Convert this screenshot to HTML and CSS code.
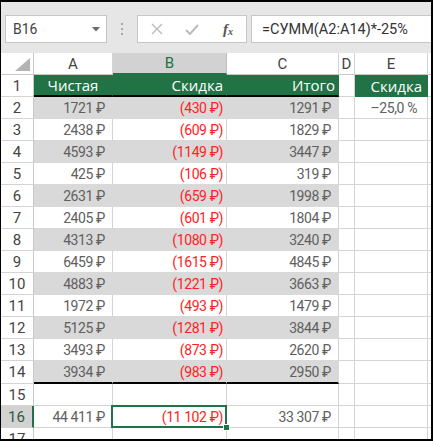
FILE: index.html
```html
<!DOCTYPE html>
<html lang="ru">
<head>
<meta charset="utf-8">
<title>Excel</title>
<link rel="stylesheet" href="styles.css">
</head>
<body>
<div class="app">
  <div class="toolbar">
    <div class="namebox">
      <span class="name">B16</span>
      <svg class="dd" width="8" height="5" viewBox="0 0 8 5"><path d="M0 0H8L4 4.5Z" fill="#6a6a6a"/></svg>
    </div>
    <div class="grip"><i></i><i></i><i></i></div>
    <div class="btnbox">
      <svg class="ico" width="12" height="12" viewBox="0 0 12 12"><path d="M1 1L11 11M11 1L1 11" stroke="#bcbcbc" stroke-width="1.4" fill="none"/></svg>
      <svg class="ico" width="14" height="11" viewBox="0 0 14 11"><path d="M1 6L5 10L13 1" stroke="#bcbcbc" stroke-width="2" fill="none"/></svg>
      <span class="fx">f<sub>x</sub></span>
    </div>
    <div class="formula">=СУММ(A2:A14)*-25%</div>
  </div>

  <div class="sheet">
    <div class="c corner"><svg width="15" height="13" viewBox="0 0 15 13"><path d="M15 0V13H0Z" fill="#b3b3b3"/></svg></div>
    <div class="c ch">A</div>
    <div class="c ch sel">B</div>
    <div class="c ch">C</div>
    <div class="c ch">D</div>
    <div class="c ch">E</div>
    <div class="c ch stub"></div>

    <div class="c rh">1</div>
    <div class="c hd hdc tbot">Чистая</div>
    <div class="c hd tbot">Скидка</div>
    <div class="c hd tbot">Итого</div>
    <div class="c"></div>
    <div class="c hd hde">Скидка</div>
    <div class="c stub"></div>

    <div class="c rh">2</div>
    <div class="c band pos">1721 ₽</div>
    <div class="c band neg">(430 ₽)</div>
    <div class="c band pos">1291 ₽</div>
    <div class="c"></div>
    <div class="c pct">–25,0 %</div>
    <div class="c stub"></div>

    <div class="c rh">3</div>
    <div class="c w pos">2438 ₽</div>
    <div class="c w neg">(609 ₽)</div>
    <div class="c w pos">1829 ₽</div>
    <div class="c"></div>
    <div class="c"></div>
    <div class="c stub"></div>

    <div class="c rh">4</div>
    <div class="c band pos">4593 ₽</div>
    <div class="c band neg">(1149 ₽)</div>
    <div class="c band pos">3447 ₽</div>
    <div class="c"></div>
    <div class="c"></div>
    <div class="c stub"></div>

    <div class="c rh">5</div>
    <div class="c w pos">425 ₽</div>
    <div class="c w neg">(106 ₽)</div>
    <div class="c w pos">319 ₽</div>
    <div class="c"></div>
    <div class="c"></div>
    <div class="c stub"></div>

    <div class="c rh">6</div>
    <div class="c band pos">2631 ₽</div>
    <div class="c band neg">(659 ₽)</div>
    <div class="c band pos">1998 ₽</div>
    <div class="c"></div>
    <div class="c"></div>
    <div class="c stub"></div>

    <div class="c rh">7</div>
    <div class="c w pos">2405 ₽</div>
    <div class="c w neg">(601 ₽)</div>
    <div class="c w pos">1804 ₽</div>
    <div class="c"></div>
    <div class="c"></div>
    <div class="c stub"></div>

    <div class="c rh">8</div>
    <div class="c band pos">4313 ₽</div>
    <div class="c band neg">(1080 ₽)</div>
    <div class="c band pos">3240 ₽</div>
    <div class="c"></div>
    <div class="c"></div>
    <div class="c stub"></div>

    <div class="c rh">9</div>
    <div class="c w pos">6459 ₽</div>
    <div class="c w neg">(1615 ₽)</div>
    <div class="c w pos">4845 ₽</div>
    <div class="c"></div>
    <div class="c"></div>
    <div class="c stub"></div>

    <div class="c rh">10</div>
    <div class="c band pos">4883 ₽</div>
    <div class="c band neg">(1221 ₽)</div>
    <div class="c band pos">3663 ₽</div>
    <div class="c"></div>
    <div class="c"></div>
    <div class="c stub"></div>

    <div class="c rh">11</div>
    <div class="c w pos">1972 ₽</div>
    <div class="c w neg">(493 ₽)</div>
    <div class="c w pos">1479 ₽</div>
    <div class="c"></div>
    <div class="c"></div>
    <div class="c stub"></div>

    <div class="c rh">12</div>
    <div class="c band pos">5125 ₽</div>
    <div class="c band neg">(1281 ₽)</div>
    <div class="c band pos">3844 ₽</div>
    <div class="c"></div>
    <div class="c"></div>
    <div class="c stub"></div>

    <div class="c rh">13</div>
    <div class="c w pos">3493 ₽</div>
    <div class="c w neg">(873 ₽)</div>
    <div class="c w pos">2620 ₽</div>
    <div class="c"></div>
    <div class="c"></div>
    <div class="c stub"></div>

    <div class="c rh">14</div>
    <div class="c band pos tbot">3934 ₽</div>
    <div class="c band neg tbot">(983 ₽)</div>
    <div class="c band pos tbot">2950 ₽</div>
    <div class="c"></div>
    <div class="c"></div>
    <div class="c stub"></div>

    <div class="c rh">15</div>
    <div class="c"></div>
    <div class="c"></div>
    <div class="c"></div>
    <div class="c"></div>
    <div class="c"></div>
    <div class="c stub"></div>

    <div class="c rh rsel">16</div>
    <div class="c pos">44 411 ₽</div>
    <div class="c neg active">(11 102 ₽)<span class="selbox"><span class="handle"></span></span></div>
    <div class="c pos">33 307 ₽</div>
    <div class="c"></div>
    <div class="c"></div>
    <div class="c stub"></div>

    <div class="c rh">17</div>
    <div class="c"></div>
    <div class="c"></div>
    <div class="c"></div>
    <div class="c"></div>
    <div class="c"></div>
    <div class="c stub"></div>
  </div>
</div>
</body>
</html>
```

FILE: styles.css
```css
* { box-sizing: border-box; }
html, body { margin: 0; padding: 0; background: #fff; }
body { font-family: Roboto, "Open Sans", "Noto Sans", "DejaVu Sans", sans-serif; }

.app {
  width: 433px;
  height: 441px;
  border-top: 2px solid #000;
  border-left: 1px solid #000;
  border-right: 2px solid #000;
  border-bottom: 2px solid #000;
  overflow: hidden;
  background: #fff;
}

/* formula bar */
.toolbar {
  height: 51px;
  background: #e6e6e6;
  display: flex;
  align-items: flex-start;
  padding: 13px 0 0 4px;
}
.namebox, .btnbox, .formula {
  height: 28px;
  background: #fff;
  border: 1px solid #c6c6c6;
  display: flex;
  align-items: center;
}
.namebox {
  width: 102px;
  padding: 0 6px 0 7px;
  justify-content: space-between;
}
.name { font-size: 14px; color: #444; }
.grip {
  width: 30px;
  height: 28px;
  display: flex;
  flex-direction: column;
  align-items: center;
  justify-content: center;
  gap: 3px;
}
.grip i { display: block; width: 2px; height: 2px; background: #a8a8a8; }
.btnbox {
  width: 110px;
  padding-left: 13px;
  gap: 22px;
}
.fx {
  font-family: "Liberation Serif", "DejaVu Serif", serif;
  font-style: italic;
  font-weight: bold;
  font-size: 15px;
  color: #555;
  margin-left: 2px;
  line-height: 1;
}
.fx sub { font-size: 10px; vertical-align: -1px; }
.formula {
  flex: 1;
  margin-left: 4px;
  margin-right: -2px;
  padding-left: 10px;
  font-size: 14.5px;
  color: #333;
}

/* sheet grid */
.sheet {
  height: 386px;
  overflow: hidden;
  display: grid;
  grid-template-columns: 33px 79px 114px 112px 16px 73px 3px;
  grid-template-rows: 22px 22px repeat(12, 22px) 23px 22px 22px 22px;
}
.c {
  border-right: 1px solid #d4d4d4;
  border-bottom: 1px solid #d4d4d4;
  display: flex;
  align-items: center;
  justify-content: flex-end;
  padding-right: 3px;
  font-size: 14px;
  font-weight: 400;
  letter-spacing: -0.4px;
  color: #606060;
  white-space: nowrap;
  min-width: 0;
}
.stub { border-right: none; padding: 0; }

.corner {
  background: #fff;
  border-right-color: #c8c8c8;
  border-bottom-color: #c8c8c8;
  align-items: flex-end;
  padding: 0 3px 3px 0;
}
.ch {
  justify-content: center;
  padding: 0;
  font-size: 15px;
  letter-spacing: 0;
  color: #444;
  border-bottom-color: #c8c8c8;
  border-right-color: #d4d4d4;
}
.ch.sel {
  background: #d2d2d2;
  color: #217346;
  border-bottom: 2px solid #217346;
  border-right-color: #c0c0c0;
}
.ch.stub { border-right: none; }
.rh {
  justify-content: center;
  padding: 0;
  font-size: 15px;
  letter-spacing: 0;
  color: #444;
  border-right-color: #c8c8c8;
  border-bottom-color: #d4d4d4;
}
.rh.rsel {
  background: #d2d2d2;
  color: #2d5a40;
  border-right: 2px solid #217346;
}

.hd {
  background: #217346;
  color: #fff;
  font-family: "Open Sans", Roboto, sans-serif;
  font-size: 15px;
  letter-spacing: 0;
  border-right-color: #217346;
  border-bottom-color: #217346;
  padding-right: 3px;
}
.hdc { justify-content: center; padding-right: 0; }
.hde { padding-right: 5px; }
.tbot { border-bottom: 2px solid #000; }

.band {
  background: #d9d9d9;
  border-right-color: #d9d9d9;
  border-bottom-color: #d9d9d9;
}
.w { border-bottom-color: #d9d9d9; }
.band.tbot, .hd.tbot { border-bottom: 2px solid #000; }

.pos { padding-right: 7px; }
.neg { color: #f22; padding-right: 3px; }
.pct { padding-right: 10px; }

.active { position: relative; }
.selbox {
  position: absolute;
  left: -2px;
  top: -1px;
  right: -1px;
  bottom: -1px;
  border: 2px solid #217346;
  pointer-events: none;
}
.handle {
  position: absolute;
  right: -5px;
  bottom: -5px;
  width: 7px;
  height: 7px;
  background: #217346;
  border: 1px solid #fff;
}
```
